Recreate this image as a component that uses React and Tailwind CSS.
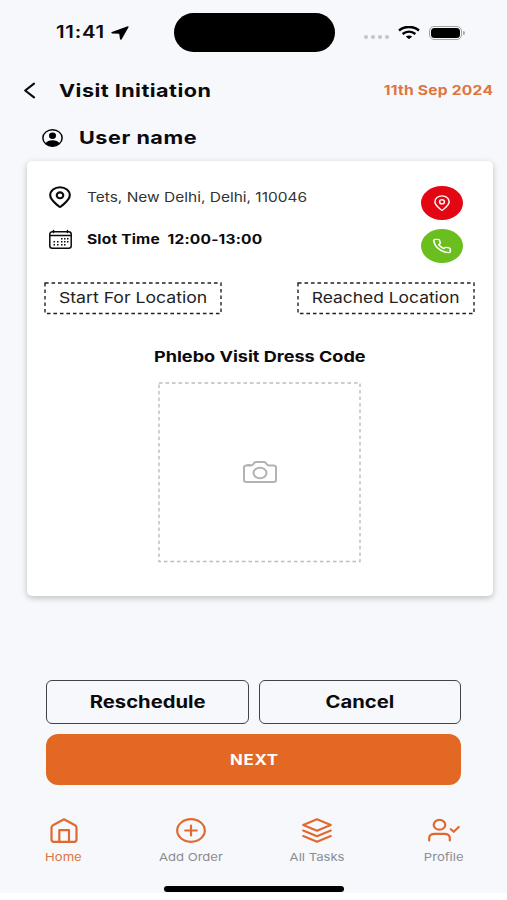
import clsx from 'clsx'

/**
 * Wide - single line of text with stretched glyphs
 */
function Wide({ className, children }) {
    return <span className={clsx('inline-block whitespace-nowrap', className)}>{children}</span>
}

/**
 * Glyph - outline icon, stretched to the size given by its classes
 */
function Glyph({ className, viewBox = '0 0 24 24', strokeWidth = 2, children }) {
    return (
        <svg
            className={clsx('block shrink-0 overflow-visible', className)}
            viewBox={viewBox}
            preserveAspectRatio="none"
            fill="none"
            stroke="currentColor"
            strokeWidth={strokeWidth}
            strokeLinecap="round"
            strokeLinejoin="round"
        >
            {children}
        </svg>
    )
}

function DashedFrame({ className }) {
    return (
        <svg className={clsx('absolute inset-0 h-full w-full overflow-visible', className)} fill="none">
            <rect width="100%" height="100%" stroke="currentColor" strokeWidth="1.4" strokeDasharray="3.6 2.9" />
        </svg>
    )
}

function PinIcon({ className, strokeWidth }) {
    return (
        <Glyph className={className} viewBox="0 0 22 22" strokeWidth={strokeWidth}>
            <path d="M12.200 20.300a1.800 1.800 0 0 1-2.400 0C6 17 1.200 13.800 1.200 9.300C1.200 4.600 5.600 1.200 11 1.200s9.800 3.400 9.800 8.100C20.800 13.800 16 17 12.200 20.300z" />
            <ellipse cx="11" cy="9.300" rx="3.300" ry="2.900" />
        </Glyph>
    )
}

function StatusBar() {
    return (
        <div className="flex h-[65px] items-center pl-14">
            <div className="flex w-[118px] items-center">
                <Wide className="w-[55px] origin-left scale-x-[1.2] text-[17px] tracking-[0.6px] font-semibold">11:41</Wide>
                <svg className="block h-[14px] w-[18px]" viewBox="0 0 18 14" preserveAspectRatio="none">
                    <path d="M16.800 .3L.9 6q-1.600.9.3 1.400l7 .4.800 5.200q.6 1.500 1.700.2L17.600 1.100q.3-1-.8-.8z" fill="black" />
                </svg>
            </div>
            <div className="h-[39px] w-[161px] rounded-full bg-black" />
            <div className="ml-[29px] mt-[8px] flex gap-[3px]">
                {[0, 1, 2, 3].map((dot) => (
                    <span key={dot} className="h-[4px] w-[4px] rounded-full bg-[#c3c5c9]" />
                ))}
            </div>
            <svg className="ml-[9px] block h-[13px] w-[22px]" viewBox="0 0 22 13" fill="none" stroke="black" strokeWidth="2.500">
                <path d="M1 4.500C6.800-.3 15.200-.3 21 4.500" />
                <path d="M4.600 8c3.800-3 9-3 12.800 0" />
                <path d="M11 13.200L7.800 10.400q3.200-2 6.400 0z" fill="black" stroke="none" />
            </svg>
            <div className="ml-[9px] h-[14px] w-[33px] rounded-[5px] border border-[#a3a4a7] p-px">
                <div className="h-full w-full rounded-[3.5px] bg-black" />
            </div>
            <div className="ml-px h-[4px] w-[1.5px] rounded-r-full bg-[#a3a4a7]" />
        </div>
    )
}

function Header() {
    return (
        <div className="flex h-[50px] items-center pl-6 pr-[14px]">
            <Glyph className="h-[15px] w-[11px]" viewBox="0 0 11 15" strokeWidth={2.2}>
                <path d="M10 .7L1.200 7.500L10 14.300" />
            </Glyph>
            <h1 className="ml-6 text-[18px] font-bold">
                <Wide className="origin-left scale-x-[1.2] tracking-[0.38px]">Visit Initiation</Wide>
            </h1>
            <Wide className="ml-auto mt-[2px] -mr-[0.5px] origin-right scale-x-[1.2] text-[13px] tracking-[0.2px] font-bold text-[#e07440]">
                11th Sep 2024
            </Wide>
        </div>
    )
}

function UserRow() {
    return (
        <div className="flex h-[45px] items-center pl-[42px]">
            <svg className="block h-[18px] w-[21px]" viewBox="0 0 24 24" preserveAspectRatio="none">
                <circle cx="12" cy="12" r="11" fill="none" stroke="black" strokeWidth="1.700" />
                <ellipse cx="12" cy="9" rx="4" ry="4.200" />
                <path d="M4 19c2.500-5.300 13.500-5.300 16 0c-2.500 5.300-13.500 5.300-16 0z" />
            </svg>
            <h2 className="ml-4 text-[18px] font-bold">
                <Wide className="origin-left scale-x-[1.2] tracking-[0.45px]">User name</Wide>
            </h2>
        </div>
    )
}

function VisitCard() {
    return (
        <div className="ml-[26.5px] mt-[0.5px] h-[435px] w-[466px] rounded-[5px] bg-white pt-[25px] shadow-[0_2px_6px_rgba(0,0,0,0.24)]">
            <div className="flex justify-between pl-[22.5px] pr-[30px]">
                <div className="text-[13px]">
                    <div className="flex h-[23px] items-center">
                        <PinIcon className="mb-px h-[22px] w-[22px]" strokeWidth={2.1} />
                        <Wide className="ml-[15.5px] mt-px origin-left scale-x-[1.19] text-[#333]">Tets, New Delhi, Delhi, 110046</Wide>
                    </div>
                    <div className="mt-5 flex h-[23px] items-center">
                        <Glyph className="mb-px h-[19px] w-[23px]" viewBox="0 0 23 19" strokeWidth={1.5}>
                            <rect x=".8" y="1.800" width="21.400" height="16.400" rx="2.500" />
                            <path d="M1 5.500h21M4.500 .5v2M18.500 .5v2" />
                            <path
                                d="M12 8.800h1.500M15 8.800h1.500M18 8.800h1.500M4.500 11.800h1.500M8 11.800h1.500M12 11.800h1.500M15 11.800h1.500M18 11.800h1.500M4.500 14.800h1.500M8 14.800h1.500M12 14.800h1.500M15 14.800h1.500"
                                strokeLinecap="butt"
                            />
                        </Glyph>
                        <Wide className="ml-[14.5px] origin-left scale-x-[1.195] tracking-[0.15px] whitespace-pre font-bold">
                            {'Slot Time  12:00-13:00'}
                        </Wide>
                    </div>
                </div>
                <div className="flex flex-col gap-[9px] text-white">
                    <button className="flex h-[34px] w-[42px] items-center justify-center rounded-[50%] bg-[#e30613]">
                        <PinIcon className="h-[16px] w-[16px]" strokeWidth={2} />
                    </button>
                    <button className="flex h-[34px] w-[42px] items-center justify-center rounded-[50%] bg-[#6abf1e]">
                        <Glyph className="h-[16px] w-[20px]" strokeWidth={2}>
                            <path d="M22 16.920v3a2 2 0 0 1-2.180 2 19.790 19.790 0 0 1-8.630-3.070 19.500 19.500 0 0 1-6-6 19.790 19.790 0 0 1-3.070-8.670A2 2 0 0 1 4.110 2h3a2 2 0 0 1 2 1.720 12.840 12.840 0 0 0 .7 2.810 2 2 0 0 1-.45 2.110L8.090 9.910a16 16 0 0 0 6 6l1.270-1.270a2 2 0 0 1 2.110-.45 12.840 12.840 0 0 0 2.810.7A2 2 0 0 1 22 16.920z" />
                        </Glyph>
                    </button>
                </div>
            </div>

            {/* Location actions */}
            <div className="mt-5 flex justify-between px-[18.5px] text-[15px] text-[#222]">
                <button className="relative flex h-[30.5px] w-[176px] items-center justify-center">
                    <DashedFrame />
                    <Wide className="scale-x-[1.175]">Start For Location</Wide>
                </button>
                <button className="relative flex h-[30.5px] w-[176px] items-center justify-center">
                    <DashedFrame />
                    <Wide className="scale-x-[1.16]">Reached Location</Wide>
                </button>
            </div>

            {/* Dress code photo */}
            <h3 className="mt-[33px] text-center text-[15px] leading-[22px] font-bold">
                <Wide className="scale-x-[1.205]">Phlebo Visit Dress Code</Wide>
            </h3>
            <div className="relative ml-[132.5px] mt-[15px] flex h-[178.5px] w-[201px] items-center justify-center">
                <DashedFrame className="text-[#bdbdbd]" />
                <Glyph className="h-[22px] w-[34px] text-[#b2b2b2]" viewBox="0 0 34 22" strokeWidth={2}>
                    <path d="M3.500 4.500h4c1.500 0 2.500-.6 3-1.500l.7-1.200Q12 1 13.500 1h7q1.500 0 2.300.8l.7 1.200c.5.9 1.500 1.500 3 1.500h4Q33 4.500 33 6.500v12.500q0 2-2.500 2h-27Q1 21 1 19V6.500q0-2 2.500-2zM4.500 3.900h2.500" />
                    <ellipse cx="17" cy="12" rx="6.500" ry="5.300" />
                </Glyph>
            </div>
        </div>
    )
}

function Actions() {
    return (
        <div className="mt-[84.5px] px-[46px]">
            <div className="flex gap-[10px] text-[17px] font-bold">
                <button className="h-[44px] flex-1 rounded-[6px] border border-[#444] pt-[2px]">
                    <Wide className="scale-x-[1.19]">Reschedule</Wide>
                </button>
                <button className="h-[44px] flex-1 rounded-[6px] border border-[#444] pt-[2px]">
                    <Wide className="scale-x-[1.19]">Cancel</Wide>
                </button>
            </div>
            <button className="mt-[10px] block h-[51px] w-full rounded-[12px] bg-[#e36823] text-[14px] font-bold text-white">
                <Wide className="ml-px scale-x-[1.2] tracking-[0.6px]">NEXT</Wide>
            </button>
        </div>
    )
}

const tabs = [
    {
        name: 'Home',
        active: true,
        icon: (
            <Glyph className="h-[25px] w-[28px]" viewBox="0 0 28 25" strokeWidth={2.2}>
                <path d="M1.500 9.500Q1.500 8 3 7.200L14 1.300l11 5.900q1.500.8 1.500 2.300v12q0 2.300-2.500 2.300H4q-2.500 0-2.500-2.300z" />
                <path d="M9.300 23.500v-11.300h9.700v11.300" />
            </Glyph>
        ),
    },
    {
        name: 'Add Order',
        icon: (
            <Glyph className="h-[25px] w-[30px]" viewBox="0 0 30 25" strokeWidth={2.2}>
                <ellipse cx="15" cy="12.500" rx="13.800" ry="11.300" />
                <path d="M15 7.500v10M9.200 12.500h11.600" />
            </Glyph>
        ),
    },
    {
        name: 'All Tasks',
        icon: (
            <Glyph className="h-[25px] w-[30px]" viewBox="0 0 30 25" strokeWidth={2.1}>
                <path d="M15 1.200L1.200 7L15 12.800L28.800 7z" />
                <path d="M1.200 12.500L15 18.300l13.800-5.800M1.200 18L15 23.800L28.800 18" />
            </Glyph>
        ),
    },
    {
        name: 'Profile',
        icon: (
            <Glyph className="h-[25px] w-[32px]" viewBox="0 0 32 25" strokeWidth={2.2}>
                <ellipse cx="11.500" cy="6.800" rx="5.800" ry="4.900" />
                <path d="M1.200 22.500v-2.300q0-4.400 5.500-4.400h9.600q5.500 0 5.500 4.400v2.300" />
                <path d="M22.800 11.200l2.900 2.600l5-4.800" />
            </Glyph>
        ),
    },
]

function TabBar() {
    return (
        <div className="mt-[33px] grid grid-cols-4">
            {tabs.map((tab) => (
                <div key={tab.name} className="flex flex-col items-center pl-px text-[#e0692f]">
                    {tab.icon}
                    <Wide
                        className={clsx(
                            'mt-[6px] scale-x-[1.19] text-[11px] leading-4',
                            tab.active ? 'text-[#e0743f]' : 'text-[#8b8d92]'
                        )}
                    >
                        {tab.name}
                    </Wide>
                </div>
            ))}
        </div>
    )
}

export default function App() {
    return (
        <div className="h-[900px] w-[507px] overflow-hidden bg-white font-['Inter',sans-serif] text-[#0b0b0d]">
            <div className="h-[893px] bg-[#f6f8fc]">
                <StatusBar />
                <Header />
                <UserRow />
                <VisitCard />
                <Actions />
                <TabBar />
                <div className="ml-[164px] mt-[21px] h-[6px] w-[180px] rounded-full bg-black" />
            </div>
        </div>
    )
}
